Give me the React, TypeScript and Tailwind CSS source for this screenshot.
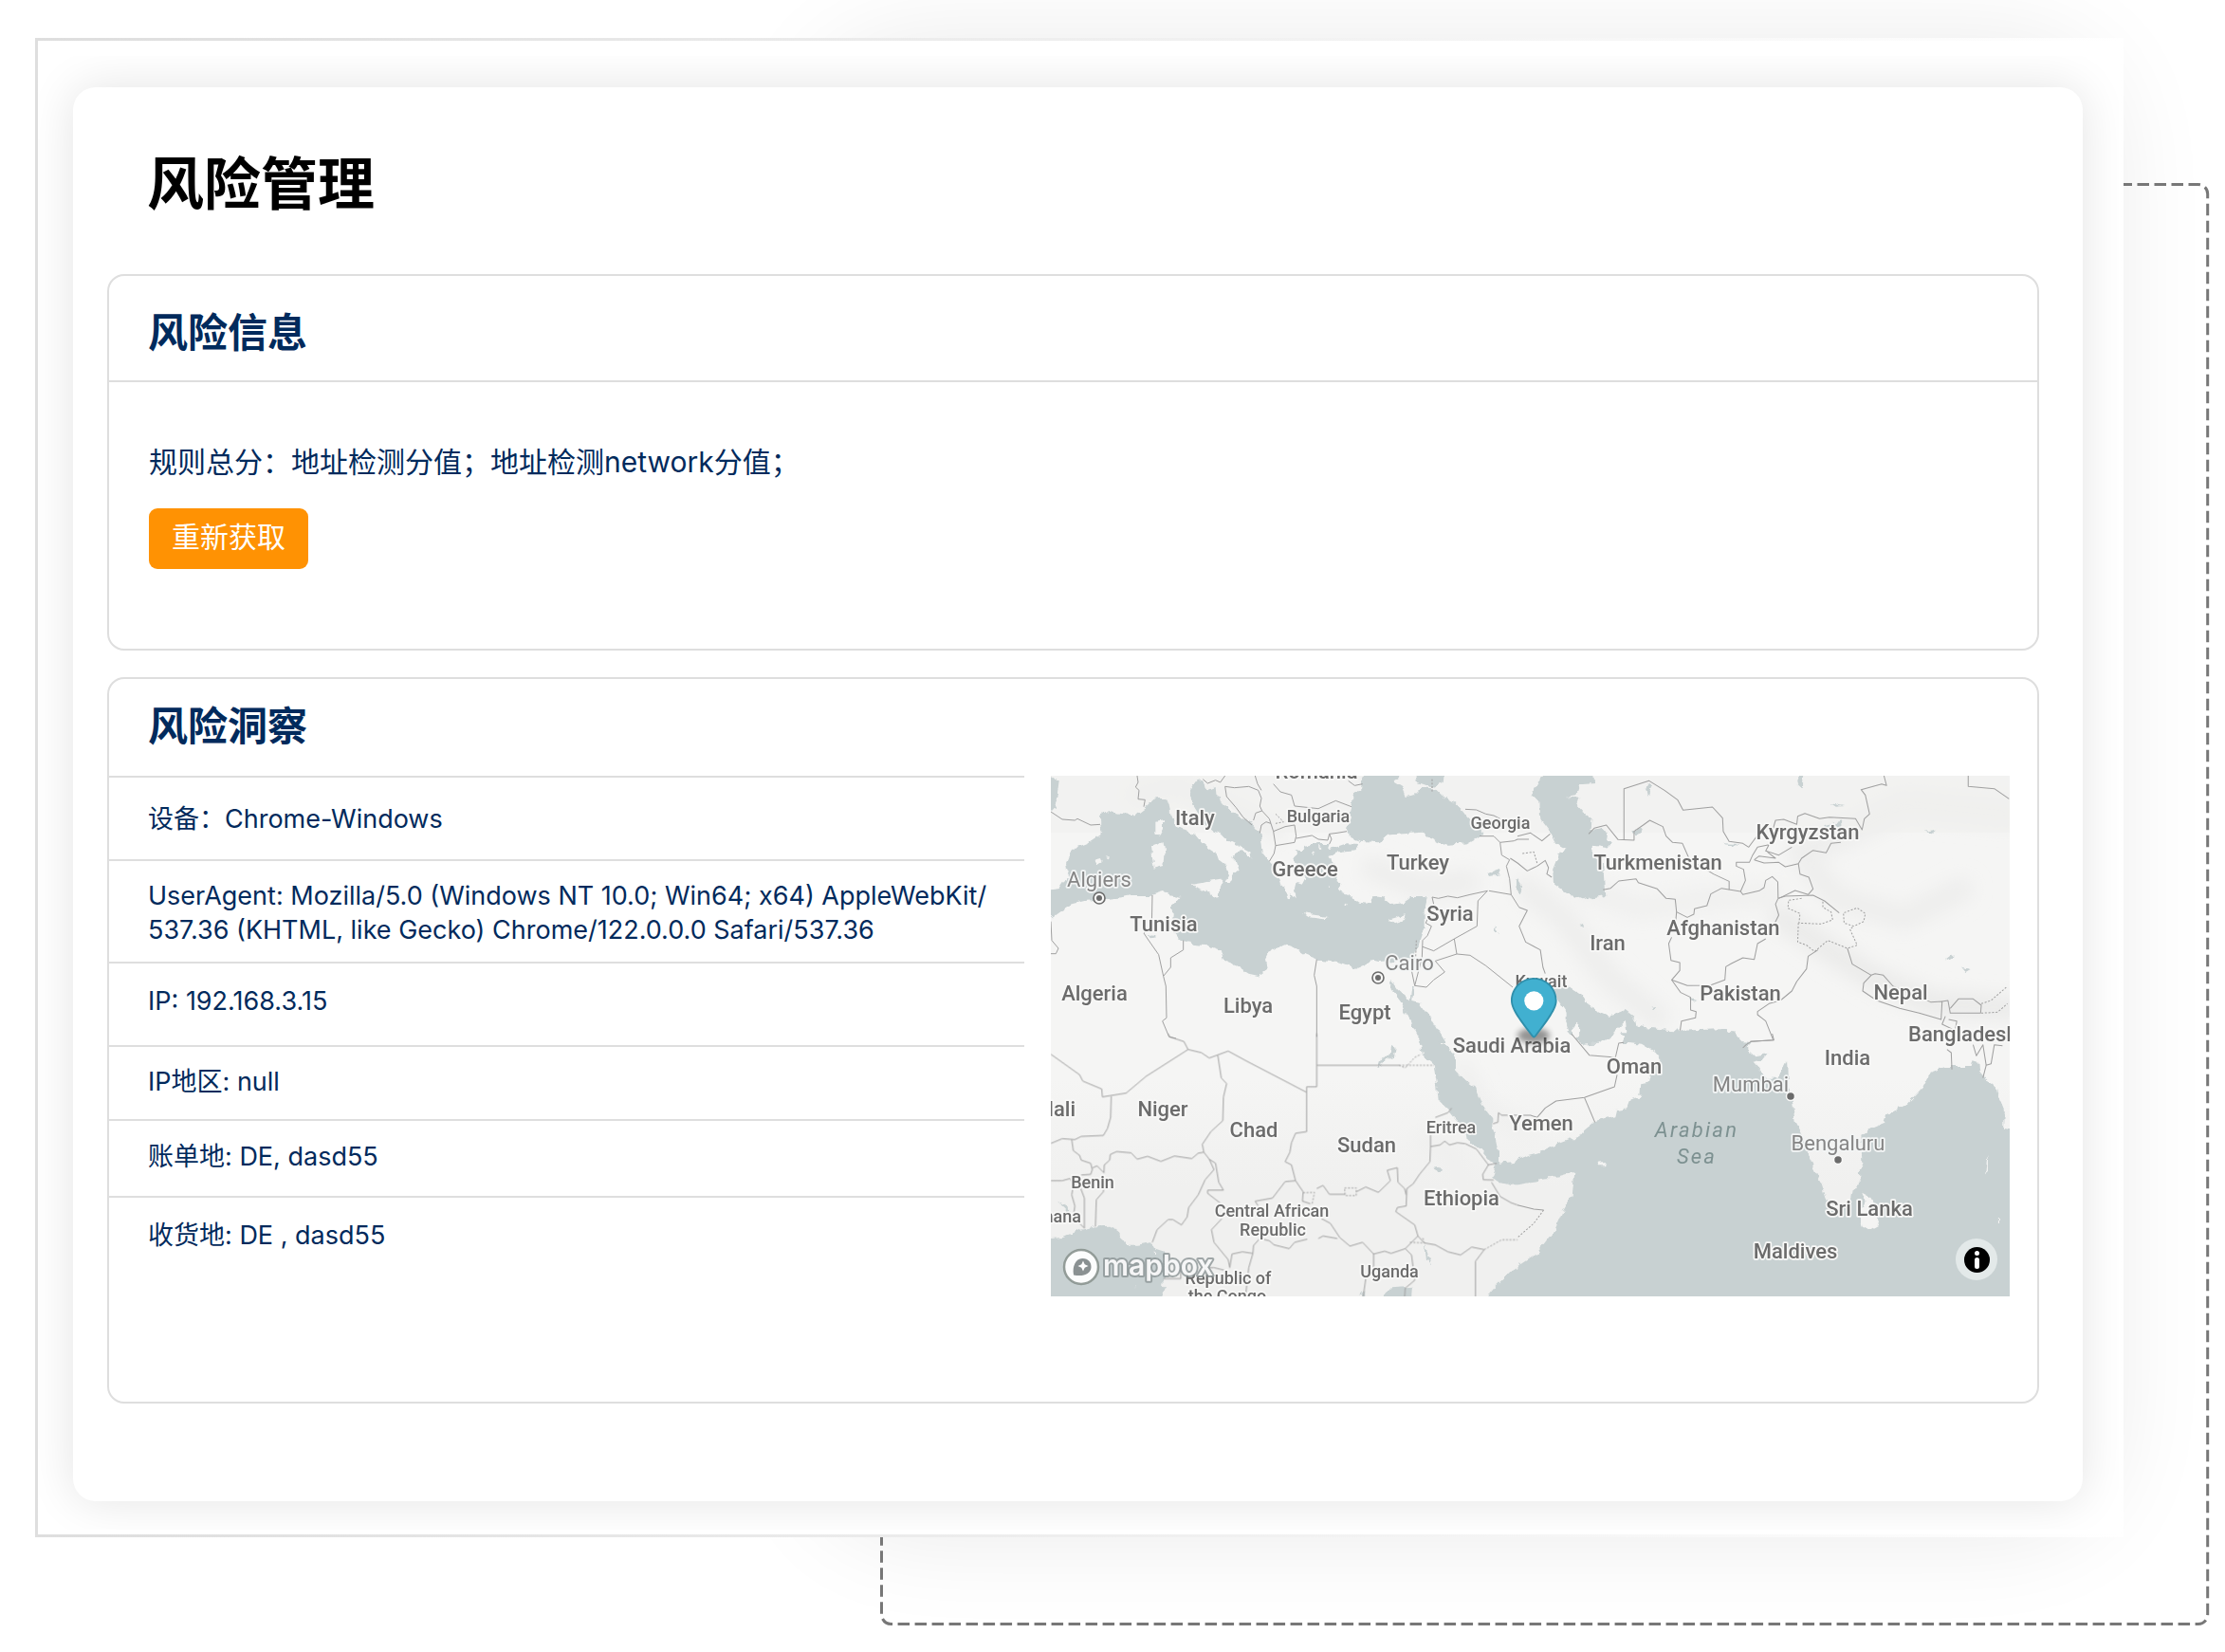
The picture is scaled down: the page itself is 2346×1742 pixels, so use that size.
import React from "react";

const sans = "font-['Inter','Noto_Sans_CJK_SC',sans-serif]";

/* The map is traced in four quadrants, each with its own scale. */
const NW = "matrix(0.33333 0 0 0.33333 -8 -8)";
const NE = "matrix(0.34439 0 0 0.33333 492 -8)";
const SW = "matrix(0.33333 0 0 0.33333 -8 272)";
const SE = "matrix(0.34439 0 0 0.33333 492 272)";

type Quadrant = {
  transform: string;
  water: string[];
  islands: string[];
  borders: string[];
  disputed: string[];
};

const quadrants: Quadrant[] = [
  {
    transform: NW,
    water: [
      "-10,384 24,382 50,378 62,360 85,345 75,320 72,300 85,270 105,250 150,232 190,205 182,185 178,155 205,135 250,145 290,148 320,125 350,98 375,95 398,110 402,145 418,185 450,195 480,210 500,235 525,255 548,270 555,290 580,310 588,340 578,360 590,360 605,330 618,318 612,300 598,285 610,265 630,262 645,280 658,283 655,265 620,245 580,225 560,205 535,195 500,160 470,110 465,70 480,45 505,35 512,60 520,70 545,60 548,90 570,115 600,140 640,165 665,180 685,205 692,240 695,270 715,295 728,310 722,330 745,350 750,370 765,385 775,412 785,395 800,412 795,380 800,360 820,365 830,345 800,310 790,285 805,270 790,258 815,262 830,245 870,240 905,240 900,255 925,250 960,238 1000,240 985,262 940,266 905,275 920,300 905,320 930,340 925,360 940,370 935,390 965,400 1000,425 1035,430 1045,408 1075,412 1100,432 1140,425 1165,408 1215,408 1205,450 1205,500 1190,545 1175,590 1168,622 1155,600 1120,612 1060,615 1040,610 990,632 930,612 870,605 830,590 800,570 765,557 720,575 705,605 710,635 680,657 650,650 610,625 570,608 560,575 520,562 480,558 440,545 425,530 405,505 408,435 430,408 400,400 380,390 340,402 280,402 240,410 190,415 130,420 90,430 55,450 24,472 -10,480",
      "-10,0 24,24 50,40 42,100 35,135 -10,140",
      "1020,0 1130,0 1125,30 1105,42 1135,60 1145,90 1175,85 1200,60 1240,65 1265,90 1300,110 1330,140 1345,160 1380,180 1390,210 1340,238 1280,242 1250,235 1215,215 1200,200 1140,205 1100,208 1060,235 1005,230 965,215 960,190 975,130 980,90 1005,65",
      "1175,0 1270,0 1265,45 1230,60 1185,45",
      "1098,668 1120,700 1160,735 1165,690 1172,690 1168,735 1190,740 1225,790 1250,830 1275,870 1195,870 1165,810 1145,770 1130,738 1100,700",
      "1405,335 1445,320 1440,340 1410,345",
      "1495,350 1515,375 1508,395 1497,380",
      "1430,498 1442,525 1432,522",
      "1545,75 1560,65 1560,95",
      "325,528 350,530 358,534 340,538",
    ],
    islands: [
      "355,170 378,165 378,195 368,215 355,205",
      "342,245 380,232 385,270 382,312 350,320 345,280",
      "470,365 560,350 568,355 555,385 555,412 525,395 480,378",
      "160,290 180,285 185,298 172,305",
      "200,281 212,279 210,286",
      "822,460 860,465 900,470 890,478 840,472",
      "1095,478 1145,463 1140,480 1110,490",
      "870,245 880,250 874,256",
      "850,270 862,268 858,276",
      "862,310 875,318 868,322",
      "905,372 912,368 912,378",
      "952,432 960,425 956,438",
      "572,112 600,128 630,158 600,142",
    ],
    borders: [
      "24,138 60,162 100,165 108,160 150,180 180,178",
      "318,122 322,100 300,98 303,70 292,60 300,45 297,24",
      "505,35 520,48 545,38 560,45 575,24",
      "660,180 632,155 610,125 580,90 575,58 605,62 650,58 680,70 690,95 685,120 692,135 715,160 720,175 728,200 765,185 795,180 800,215 795,235 735,245",
      "670,24 678,50 690,70",
      "685,205 690,180 705,170 720,175",
      "728,200 735,245 730,270 715,295",
      "728,50 750,75 785,85 795,120 870,128 925,103 975,122",
      "965,40 985,55 1010,50",
      "800,222 850,213 870,225 900,228 905,208 930,205 960,200",
      "905,208 912,225 905,240",
      "665,165 672,142 692,135",
      "1335,130 1370,132 1400,145 1425,150 1445,160",
      "1380,215 1425,215 1445,235 1490,230",
      "1445,235 1450,275 1475,290",
      "1475,290 1465,310 1475,350 1480,400 1410,388",
      "1230,408 1250,412 1280,405 1310,410 1350,400 1405,388 1375,420 1372,500 1300,540 1235,578 1200,565",
      "1300,540 1308,588 1240,610 1270,645 1235,670 1212,693 1175,688",
      "1308,588 1350,592 1400,625 1485,693",
      "1480,400 1505,440",
      "1230,408 1235,430 1210,490 1228,500 1215,530 1200,545 1198,600 1175,688 1165,640",
      "865,605 857,655 865,690 865,850",
      "443,545 443,575 403,600 403,630 380,658 388,690 390,790 377,800 398,850 420,855",
      "345,402 343,500 318,522 330,540 365,590 380,658",
      "24,485 27,545 48,570 40,587 24,587",
    ],
    disputed: ["735,145 760,170 735,175", "1230,35 1230,75", "1180,545 1178,600"],
  },
  {
    transform: NE,
    water: [
      "60,50 70,35 120,0 235,0 238,48 190,52 180,85 150,90 190,95 182,120 200,140 228,160 225,195 260,190 290,238 275,252 232,245 230,280 262,300 268,405 200,418 150,395 110,365 108,320 130,262 150,258 120,240 100,200 70,160 68,110 42,85",
      "400,45 410,60 398,90 393,70",
      "855,0 880,0 873,60 858,45",
      "370,180 382,200 365,215 355,205",
      "630,238 680,240 660,248",
      "940,180 1000,165 985,182 955,190",
      "960,112 1000,120 975,122",
      "1245,200 1280,195 1265,208",
      "1310,600 1325,588 1338,600 1325,608",
      "1360,630 1388,635 1372,645",
      "190,495 205,488 205,502",
      "0,350 15,375 5,395 -5,380",
      "408,752 422,750 412,765",
      "528,725 550,732 535,738",
      "100,690 145,678 170,700 200,720 225,760 280,785 330,765 355,785 365,815 430,825 500,830 640,825 660,840 690,870 320,870 335,835 330,800 300,830 270,860 245,872 195,870 175,857 190,845 188,810 178,800 170,815 172,850 160,835 150,800 150,770 120,725",
    ],
    islands: [],
    borders: [
      "218,208 235,190 272,180 308,226 357,228 357,200 385,180 405,165 445,185 455,215 475,235 505,238 525,285 545,300 600,335 648,358 648,385",
      "326,226 326,65 403,40 450,70 490,100 507,133 597,123 628,158 630,200 648,232 690,238 708,250 735,212",
      "783,190 790,165 815,162 855,178 858,152 880,143 925,160 955,155 1035,160 1055,195 1062,160 1078,145 1065,85 1052,68 1115,50 1130,55 1122,24",
      "262,385 285,380 310,357 363,350 370,362 428,382 455,412 483,415 487,455 520,472 540,462 542,445 580,435 592,398 625,380 683,390 690,400 740,388 755,378 760,355 780,343 797,360 798,412",
      "683,390 698,355 692,320 670,310 670,298 710,298 720,275 735,250 770,242 760,262 800,275 840,250",
      "725,290 755,300 800,298 820,312 860,302 865,335 892,345 905,382 890,400 850,387 800,412",
      "725,290 740,278 790,285 765,265",
      "860,302 870,285 905,260 945,268 960,238 990,235",
      "798,412 820,405 905,402 940,420 985,458",
      "798,412 790,430 800,465 788,490",
      "487,455 483,500",
      "472,535 463,555 470,608 497,615 497,640 472,670 520,688 590,687 635,670 638,628 655,618 690,600 725,605 735,555 760,540",
      "472,670 500,710 530,725 530,765 547,770 545,790 502,800 498,830",
      "920,575 890,595 885,635 855,675 840,705 805,735 770,745 735,770 735,780 760,800 783,860 712,865",
      "1010,570 1025,620 1083,655 1060,680 1057,705 1100,735 1170,760 1230,775 1297,795 1300,738 1265,740 1150,690 1120,655 1095,650 1083,655",
      "1300,738 1318,735 1325,775 1418,775 1420,750 1395,730 1350,730 1325,760",
      "1380,24 1380,58 1460,65 1505,97",
      "1310,785 1300,810 1340,830 1345,800 1320,795",
      "5,440 30,450 5,500 25,550 70,575 78,630 85,650",
      "-10,230 0,225 35,225",
      "0,215 40,205 75,230 100,208",
      "-22,285 0,300 30,325 60,310 85,292 95,315 90,335 105,345",
    ],
    disputed: [
      "870,412 830,418 828,443 865,460 862,490 930,493 965,480 960,455 935,440 935,420",
      "860,490 858,550 885,560 910,580 950,545 1010,570 1040,560 1018,510 1030,500 1000,490 998,458 1040,442 1065,460 1060,485 1030,500",
      "1420,745 1450,735 1500,690",
      "1420,775 1470,772 1500,745",
      "15,270 50,265 60,300",
    ],
  },
  {
    transform: SW,
    water: [
      "1180,-20 1240,-20 1245,0 1250,30 1285,40 1305,75 1305,115 1330,145 1365,170 1385,220 1420,265 1420,290 1430,330 1440,375 1440,410 1490,405 1530,385 1570,375 1570,468 1480,480 1440,470 1420,455 1435,415 1410,400 1385,370 1340,335 1335,300 1300,265 1280,240 1250,210 1245,160 1235,100 1200,70 1195,40",
      "-10,650 60,645 120,620 165,610 215,608 240,628 262,668 300,668 345,660 355,680 385,690 378,730 390,765 375,790 388,805 365,860 -10,860",
      "1390,860 1405,832 1430,800 1480,750 1535,715 1570,690 1570,860",
      "1075,832 1100,805 1170,800 1165,860 1075,860",
      "1205,662 1215,690 1232,735 1212,710",
      "1240,425 1255,422 1260,432 1250,440",
      "1060,110 1070,80 1100,65 1105,35 1115,45 1110,75 1080,85 1065,110",
      "1000,825 1015,810 1015,850",
      "45,530 80,550 85,575 70,555",
    ],
    islands: ["350,685 356,690 352,700", "288,795 292,795 291,803"],
    borders: [
      "24,65 115,130 125,150 185,175 187,200 262,188 325,135 458,50 445,25 400,10 395,0",
      "458,50 500,60 525,77 585,55 640,85 832,185",
      "865,0 865,168 833,168 833,310 798,315 785,345 780,375 765,405 785,415 798,465",
      "865,100 1125,100",
      "552,68 563,140 580,158 570,200 568,275 530,310 503,350 508,375",
      "215,198 213,265 203,300 190,322 120,325 100,335 60,332 24,347",
      "90,335 95,370 115,385 120,400 150,410 155,430 150,445 120,447",
      "155,425 170,418 192,440",
      "192,440 193,415 210,400 212,382 232,373 278,377 297,397 330,388 372,404 415,387 470,395 490,378 508,375 525,397 545,410 555,470 570,495 520,495 520,505 565,540",
      "525,397 540,430 512,462 490,510 460,550 455,580 437,605 410,588 395,588 360,620 345,660",
      "192,480 190,500 168,525 165,610",
      "24,465 60,465 85,458 95,480 90,510 100,545 95,580 130,615",
      "115,480 130,520 130,615",
      "798,465 765,468 725,520 670,530 680,545",
      "565,585 532,620 540,660 585,715 590,740",
      "798,465 822,500 820,530 845,538",
      "865,490 885,480 905,508 955,508",
      "990,500 1020,485 1060,502 1098,465 1088,432 1120,424 1122,470 1143,490 1148,510",
      "1225,357 1223,405 1190,445 1170,475 1150,490 1148,545 1120,550 1115,563 1175,605 1185,640",
      "1225,357 1225,320",
      "1240,265 1280,250 1292,235",
      "1225,357 1255,352 1270,340 1285,352 1310,345 1335,348 1370,365 1408,415 1390,445 1392,462 1425,463",
      "1408,415 1435,410",
      "1418,470 1445,515 1480,535 1500,542",
      "1185,640 1205,662 1240,668 1280,690 1320,700 1355,675 1395,683",
      "1395,683 1367,720 1367,832",
      "880,585 908,600 938,645 970,672 1010,660 1045,697 1080,688 1100,695 1145,680 1185,640",
      "1045,697 1045,740",
      "1145,680 1165,700 1175,780 1145,805 1143,832",
      "1020,775 1012,832",
      "663,695 665,670 685,648 715,655 730,668 778,680 795,660 835,650",
      "590,740 597,697 630,690 663,695 650,740 640,830",
      "870,648 885,640 930,648",
      "500,740 540,740 580,750",
      "380,775 435,775 435,740",
      "1422,285 1438,280 1440,250 1450,258 1500,258",
    ],
    disputed: [
      "1125,100 1237,100",
      "1125,100 1145,108 1175,75 1195,65",
      "822,503 858,502 850,540",
      "1395,683 1450,652 1500,652",
      "953,488 990,488 990,512 955,512 953,488",
      "1160,660 1205,662 1200,645",
    ],
  },
  {
    transform: SE,
    water: [
      "190,-5 190,20 200,35 250,30 290,10 300,-5",
      "320,-5 340,30 380,35 420,60 437,85 410,110 400,155 378,160 375,200 345,208 335,235 305,240 300,262 235,280 205,305 200,320 110,355 70,375 0,397 0,472 45,468 60,460 110,455 175,437 168,510 140,560 110,630 75,675 35,720 0,745 0,860 1530,860 1530,305 1490,300 1492,240 1475,200 1470,175 1440,150 1415,120 1412,90 1395,85 1390,105 1310,105 1265,120 1240,170 1190,225 1130,255 1120,285 1085,300 1055,320 1058,410 1045,440 1048,480 1025,490 1020,520 1005,540 985,560 965,560 948,530 930,470 910,430 890,380 870,320 850,280 840,200 828,160 825,90 800,140 765,140 722,92 750,85 768,62 730,70 705,45 715,30 690,28 660,-5",
    ],
    islands: [
      "1055,503 1085,520 1108,570 1105,605 1075,622 1055,610 1050,560 1065,530",
      "247,410 270,408 268,418 250,418",
      "1443,380 1443,435 1435,442 1440,400",
      "1472,582 1475,582 1475,594 1472,594",
    ],
    borders: [
      "165,0 220,68 300,75 310,30 325,28",
      "305,130 297,168 205,202 118,213 85,235 60,265 40,258 0,258",
      "205,202 237,280",
      "1315,50 1328,60 1330,113",
      "1395,35 1405,70 1425,35 1435,100 1450,95 1460,35 1485,38",
      "1435,100 1425,140",
      "690,45 700,35 715,25 785,20 780,0",
      "0,542 50,555 80,558",
    ],
    disputed: ["80,558 50,600 0,645"],
  },
];

/* Soft relief: width, grey, points */
const relief: [number, string, string][] = [
  [26, "#eeeeed", "340,98 390,118 440,112"],
  [26, "#eeeeed", "500,118 540,150 590,215 640,255"],
  [26, "#ebebea", "770,150 830,190 870,215 930,240 1011,245"],
  [30, "#eeeeed", "790,80 840,60 900,30 1011,40"],
  [26, "#eeeeed", "800,95 830,130 900,150 960,120"],
  [24, "#f0f0ef", "560,118 620,140 690,130 760,125"],
  [20, "#efefee", "90,20 130,10 180,30 240,60"],
  [20, "#eeeeed", "395,385 425,400 440,460 410,480"],
  [18, "#efefee", "435,310 455,350 500,375"],
];

type Label = {
  text: string;
  x: number;
  y: number;
  kind?: "small" | "city" | "sea";
  anchor?: "start" | "middle" | "end";
};

const labels: Label[] = [
  { text: "Romania", x: 280, y: 3 },
  { text: "Italy", x: 152, y: 52 },
  { text: "Bulgaria", x: 282, y: 49, kind: "small" },
  { text: "Georgia", x: 474, y: 56, kind: "small" },
  { text: "Greece", x: 268, y: 106 },
  { text: "Turkey", x: 387, y: 99 },
  { text: "Algiers", x: 51, y: 117, kind: "city" },
  { text: "Tunisia", x: 119, y: 164 },
  { text: "Syria", x: 421, y: 153 },
  { text: "Cairo", x: 378, y: 205, kind: "city" },
  { text: "Algeria", x: 46, y: 237 },
  { text: "Libya", x: 208, y: 250 },
  { text: "Egypt", x: 331, y: 257 },
  { text: "Niger", x: 118, y: 359 },
  { text: "Mali", x: 26, y: 359, anchor: "end" },
  { text: "Chad", x: 214, y: 381 },
  { text: "Sudan", x: 333, y: 397 },
  { text: "Eritrea", x: 422, y: 377, kind: "small" },
  { text: "Ethiopia", x: 433, y: 453 },
  { text: "Benin", x: 44, y: 435, kind: "small" },
  { text: "Ghana", x: 32, y: 471, kind: "small", anchor: "end" },
  { text: "Central African", x: 233, y: 465, kind: "small" },
  { text: "Republic", x: 234, y: 485, kind: "small" },
  { text: "Uganda", x: 357, y: 529, kind: "small" },
  { text: "Republic of", x: 187, y: 536, kind: "small" },
  { text: "the Congo", x: 186, y: 555, kind: "small" },
  { text: "Yemen", x: 517, y: 374 },
  { text: "Saudi Arabia", x: 486, y: 292 },
  { text: "Iran", x: 587, y: 184 },
  { text: "Afghanistan", x: 709, y: 168 },
  { text: "Kyrgyzstan", x: 798, y: 67 },
  { text: "Turkmenistan", x: 640, y: 99 },
  { text: "Pakistan", x: 727, y: 237 },
  { text: "Nepal", x: 896, y: 236 },
  { text: "Kuwait", x: 517, y: 223, kind: "small" },
  { text: "Bangladesh", x: 904, y: 280, anchor: "start" },
  { text: "Oman", x: 615, y: 314 },
  { text: "India", x: 840, y: 305 },
  { text: "Mumbai", x: 738, y: 333, kind: "city" },
  { text: "Arabian", x: 681, y: 381, kind: "sea" },
  { text: "Sea", x: 681, y: 409, kind: "sea" },
  { text: "Bengaluru", x: 830, y: 395, kind: "city" },
  { text: "Sri Lanka", x: 863, y: 464 },
  { text: "Maldives", x: 785, y: 509 },
];

const labelStyle = {
  country: "text-[22px] font-medium fill-[#6b6b6b] stroke-[#f8f8f7]",
  small: "text-[18px] font-medium fill-[#6b6b6b] stroke-[#f8f8f7]",
  city: "text-[22px] font-normal fill-[#858585] stroke-[#f3f5f5]",
  sea: "text-[22px] font-normal italic tracking-widest fill-[#7d9191] stroke-none",
};

function WorldMap() {
  return (
    <svg
      viewBox="0 0 1011 549"
      preserveAspectRatio="xMidYMid slice"
      className="block h-[549px] w-full bg-[#f5f5f4] font-['Roboto',sans-serif]"
      role="img"
      aria-label="IP 位置地图"
    >
      <defs>
        <filter id="coast" x="-5%" y="-5%" width="110%" height="110%">
          <feTurbulence type="fractalNoise" baseFrequency="0.12" numOctaves="2" seed="4" result="n" />
          <feDisplacementMap in="SourceGraphic" in2="n" scale="7" xChannelSelector="R" yChannelSelector="G" />
        </filter>
        <filter id="soft" x="-20%" y="-20%" width="140%" height="140%">
          <feGaussianBlur stdDeviation="9" />
        </filter>
        <filter id="pinShadow" x="-50%" y="-50%" width="200%" height="200%">
          <feGaussianBlur stdDeviation="3" />
        </filter>
        <linearGradient id="tropics" x1="0" y1="0" x2="0" y2="1">
          <stop offset="0" stopColor="#f0f0ef" stopOpacity="0" />
          <stop offset="0.5" stopColor="#f0f0ef" stopOpacity="1" />
        </linearGradient>
      </defs>

      <g fill="none" strokeLinecap="round" strokeLinejoin="round" filter="url(#soft)">
        {relief.map(([w, color, pts]) => (
          <polyline key={pts} points={pts} stroke={color} strokeWidth={w} />
        ))}
      </g>
      <rect x="0" y="320" width="1011" height="229" fill="url(#tropics)" />
      <rect x="0" y="0" width="1011" height="60" fill="#f0f0ef" opacity="0.6" />

      <g filter="url(#coast)">
        {quadrants.map((q) => (
          <g key={q.transform} transform={q.transform}>
            {q.water.map((p) => (
              <polygon key={p} points={p} fill="#c8d1d2" />
            ))}
            {q.islands.map((p) => (
              <polygon key={p} points={p} fill="#f4f4f3" />
            ))}
          </g>
        ))}
      </g>

      {quadrants.map((q) => (
        <g key={q.transform} transform={q.transform} fill="none" stroke="#a0a0a0" strokeWidth="3" strokeLinejoin="round">
          {q.borders.map((p) => (
            <polyline key={p} points={p} />
          ))}
          {q.disputed.map((p) => (
            <polyline key={p} points={p} strokeDasharray="6 5" />
          ))}
        </g>
      ))}

      {[
        [51, 129],
        [345, 213],
      ].map(([x, y]) => (
        <g key={x}>
          <circle cx={x} cy={y} r="6" fill="#f8f8f7" stroke="#6b6b6b" strokeWidth="1.6" />
          <circle cx={x} cy={y} r="3" fill="#6b6b6b" />
        </g>
      ))}
      {[
        [780, 338],
        [830, 405],
      ].map(([x, y]) => (
        <circle key={x} cx={x} cy={y} r="4.5" fill="#6b6b6b" stroke="#f8f8f7" strokeWidth="1.5" />
      ))}

      <g strokeWidth="3.5" strokeLinejoin="round" style={{ paintOrder: "stroke" }}>
        {labels.map((l) => (
          <text key={l.text + l.y} x={l.x} y={l.y} textAnchor={l.anchor ?? "middle"} className={labelStyle[l.kind ?? "country"]}>
            {l.text}
          </text>
        ))}
      </g>

      <ellipse cx="509" cy="274" rx="17" ry="8" fill="#000" opacity="0.4" filter="url(#pinShadow)" />
      <g transform="translate(485 213) scale(1.8)">
        <path
          d="M27 13.5C27 19.07 20.25 27 14.75 34.5C14.02 35.5 12.98 35.5 12.25 34.5C6.75 27 0 19.22 0 13.5C0 6.04 6.04 0 13.5 0C20.96 0 27 6.04 27 13.5Z"
          fill="#2f8fab"
        />
        <path
          d="M26 13.5C26 18.6 19.5 26.2 14 33.8C13.7 34.2 13.3 34.2 13 33.8C7.5 26.2 1 18.8 1 13.5C1 6.6 6.6 1 13.5 1C20.4 1 26 6.6 26 13.5Z"
          fill="#41b0d0"
        />
        <circle cx="13.5" cy="13.5" r="5.6" fill="#fff" />
      </g>
    </svg>
  );
}

function MapboxLogo() {
  return (
    <a href="#mapbox" aria-label="mapbox" className="absolute bottom-2.5 left-3">
      <svg width="164" height="42" viewBox="0 0 164 42" className="block font-['Inter',sans-serif]">
        <circle cx="20" cy="21" r="18" fill="#fff" fillOpacity="0.95" stroke="#89938f" strokeOpacity="0.9" strokeWidth="2.5" />
        <path d="M12 29.5C10.5 20 14 12.500 21 12C27 11.500 31 16 30.500 21.500C30 28 23 31.500 12 29.500Z" fill="#8a9192" />
        <path d="M22 14.500L23.700 18.300L27.500 20L23.700 21.700L22 25.500L20.300 21.700L16.500 20L20.300 18.300Z" fill="#fff" />
        <text
          x="43"
          y="30"
          className="text-[30px] font-semibold"
          fill="#fff"
          fillOpacity="0.9"
          stroke="#8b9495"
          strokeOpacity="0.8"
          strokeWidth="4"
          strokeLinejoin="round"
          style={{ paintOrder: "stroke" }}
        >
          mapbox
        </text>
      </svg>
    </a>
  );
}

const rows: { label: string; value: React.ReactNode; pad: string }[] = [
  { label: "设备：", value: "Chrome-Windows", pad: "pt-[26px] pb-[24px]" },
  {
    label: "UserAgent: ",
    value: (
      <>
        Mozilla/5.0 (Windows NT 10.0; Win64; x64) AppleWebKit/
        <br />
        537.36 (KHTML, like Gecko) Chrome/122.0.0.0 Safari/537.36
      </>
    ),
    pad: "pt-[19px] pb-[15px]",
  },
  { label: "IP: ", value: "192.168.3.15", pad: "pt-[22px] pb-[28px]" },
  { label: "IP地区: ", value: "null", pad: "pt-[19px] pb-[21px]" },
  { label: "账单地: ", value: "DE, dasd55", pad: "pt-[20px] pb-[23px]" },
  { label: "收货地: ", value: "DE , dasd55", pad: "pt-[22px] pb-[21px]" },
];

export default function App() {
  return (
    <div className={`relative min-h-screen overflow-hidden bg-white pt-10 pr-[107px] pb-[120px] pl-[37px] ${sans}`}>
      <div className="absolute top-[45px] right-[122px] bottom-[125px] left-[860px] rounded-[100px] bg-[#f5f5f5] shadow-[0_0_110px_rgba(0,0,0,0.09)]" />
      <div className="absolute top-[193px] right-[17px] bottom-[28px] left-[928px]">
        <svg width="100%" height="100%" className="block overflow-visible" aria-hidden="true">
          <rect x="1.5" y="1.5" width="99.8%" height="99.8%" rx="10" fill="none" stroke="#777" strokeWidth="3" strokeDasharray="12.5 5.500" />
        </svg>
      </div>

      <div className="relative bg-linear-to-r from-[#dedede] to-white p-[3px]">
        <div className="bg-white pt-4 pr-[2px] pb-[5px]">
          <div className="overflow-hidden pt-[33px] pr-[38px] pb-[30px] pl-[37px]">
            <main className="rounded-3xl bg-white pr-[46px] pb-[103px] pl-9 shadow-[0_0_50px_rgba(0,0,0,0.11)]">
              <h1 className="pt-[62px] pb-[55px] pl-[42px] text-[60px] leading-[80px] font-bold text-black">风险管理</h1>

              <section className="rounded-[18px] border-2 border-[#dedede]">
                <h2 className="border-b-2 border-[#dedede] px-[41px] pt-[30px] pb-[20px] text-[42px] leading-[60px] font-bold text-[#012a5c]">
                  风险信息
                </h2>
                <div className="px-[42px] pt-[62px] pb-[84px]">
                  <p className="text-[30px] leading-[44px] text-[#012a5c]">规则总分：地址检测分值；地址检测network分值；</p>
                  <button
                    type="button"
                    className="mt-[27px] block rounded-[9px] bg-[#ff9203] px-6 pt-2 pb-3 text-[30px] leading-[44px] text-white"
                  >
                    重新获取
                  </button>
                </div>
              </section>

              <section className="mt-7 rounded-[18px] border-2 border-[#dedede] pb-[111px]">
                <h2 className="px-[41px] pt-[20px] pb-[22px] text-[42px] leading-[60px] font-bold text-[#012a5c]">风险洞察</h2>
                <div className="grid grid-cols-[965fr_1011fr] gap-7 pr-[29px]">
                  <dl className="text-[27px] leading-[36px] text-[#012a5c]">
                    {rows.map((r) => (
                      <div key={r.label} className={`border-t-2 border-[#dedede] pl-[41px] ${r.pad}`}>
                        <dt className="inline whitespace-pre-wrap">{r.label}</dt>
                        <dd className="inline">{r.value}</dd>
                      </div>
                    ))}
                  </dl>
                  <div className="relative self-start overflow-hidden">
                    <WorldMap />
                    <MapboxLogo />
                    <button
                      type="button"
                      aria-label="地图信息"
                      className="absolute right-[13px] bottom-[17px] flex size-11 items-center justify-center rounded-full bg-[#e3e9e9]"
                    >
                      <svg width="27" height="27" viewBox="0 0 27 27">
                        <circle cx="13.5" cy="13.5" r="13.5" fill="#000" />
                        <circle cx="13.5" cy="6.500" r="2.500" fill="#fff" />
                        <rect x="11" y="11" width="5" height="12" rx="2.500" fill="#fff" />
                      </svg>
                    </button>
                  </div>
                </div>
              </section>
            </main>
          </div>
        </div>
      </div>
    </div>
  );
}
